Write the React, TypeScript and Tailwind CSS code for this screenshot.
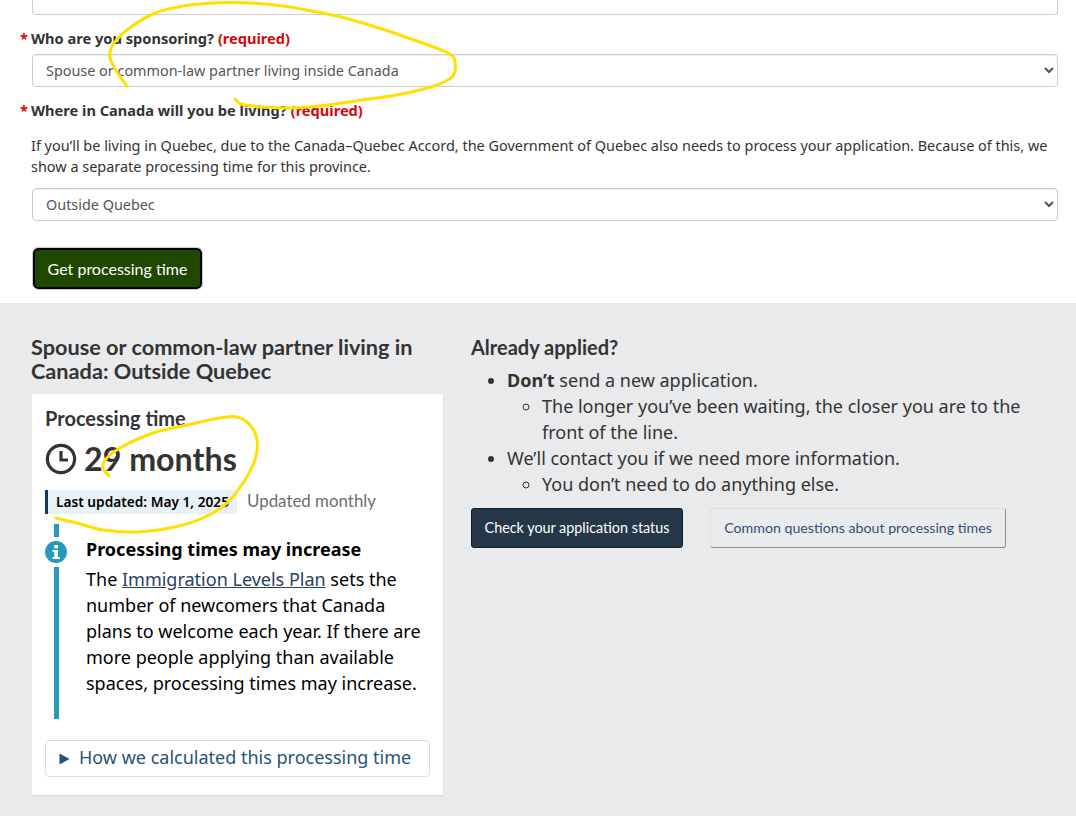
import React from "react";

const noto = { fontFamily: '"Noto Sans", sans-serif' };
const lato = { fontFamily: 'Lato, sans-serif' };

function smooth(p: number[][]) {
  let d = `M${p[0][0]} ${p[0][1]}`;
  for (let i = 0; i < p.length - 1; i++) {
    const a = p[Math.max(i - 1, 0)];
    const b = p[i];
    const c = p[i + 1];
    const e = p[Math.min(i + 2, p.length - 1)];
    d += `C${(b[0] + (c[0] - a[0]) / 6).toFixed(1)} ${(b[1] + (c[1] - a[1]) / 6).toFixed(1)} ${(c[0] - (e[0] - b[0]) / 6).toFixed(1)} ${(c[1] - (e[1] - b[1]) / 6).toFixed(1)} ${c[0]} ${c[1]}`;
  }
  return d;
}

const loopA = [[127,86],[117,72],[110,57],[114,43],[131,27],[155,13],[183,6],[214,3],[248,3],[283,6],[317,12],[345,18],[379,28],[414,40],[448,53],[455,62],[452,77],[431,87],[397,95],[362,100],[328,105],[293,108],[262,107],[241,104],[235,99]];
const loopB = [[109,476],[103,468],[105,460],[120,448],[153,433],[187,425],[220,418],[237,417],[250,425],[257,440],[255,460],[243,483],[227,503],[203,518],[170,528],[137,532],[103,530],[77,523],[56,518]];

function Field({ value }: { value: string }) {
  return (
    <select
      defaultValue={value}
      className="block w-[1026px] h-[33px] ml-[32px] pl-[9px] pr-[8px] bg-white border border-[#ccc] rounded-[4px] text-[14.4px] text-[#555] shadow-[inset_0_1px_1px_rgba(0,0,0,0.075)]"
      style={noto}
    >
      <option>{value}</option>
    </select>
  );
}

function Label({ text }: { text: string }) {
  return (
    <div className="flex items-baseline h-[22px] text-[14.6px] leading-[22px] font-bold text-[#333]">
      <span className="w-[31px] pl-[20px] text-[#d3080c]">*</span>
      <span>{text}</span>
      <span className="ml-[4px] text-[#d3080c]">(required)</span>
    </div>
  );
}

export default function App() {
  return (
    <div className="relative w-[1076px] h-[816px] overflow-hidden bg-white" style={noto}>
      <div className="h-[303px] bg-white">
        <div className="h-[15px] ml-[32px] w-[1026px] border border-t-0 border-[#ccc] rounded-b-[4px]" />
        <div className="pt-[12px]">
          <Label text="Who are you sponsoring?" />
        </div>
        <div className="mt-[5px]">
          <Field value="Spouse or common-law partner living inside Canada" />
        </div>
        <div className="pt-[12px]">
          <Label text="Where in Canada will you be living?" />
        </div>
        <p className="mt-[14px] ml-[31px] w-[1030px] text-[14.45px] leading-[21px] text-[#333]">
          If you’ll be living in Quebec, due to the Canada–Quebec Accord, the Government of Quebec also needs to process your application. Because of this, we show a separate processing time for this province.
        </p>
        <div className="mt-[11px]">
          <Field value="Outside Quebec" />
        </div>
        <button
          className="block mt-[27px] ml-[33px] w-[169px] h-[41px] rounded-[5px] bg-[#1f4700] border-2 border-black outline outline-1 outline-[#ccc] text-white text-[16px]"
          style={lato}
        >
          Get processing time
        </button>
      </div>

      <div className="h-[513px] bg-[#e9eaec] flex">
        <div className="w-[412px] ml-[32px] shrink-0">
          <h2 className="mt-[32px] -ml-[1px] text-[21.7px] leading-[24px] font-bold text-[#333] w-[400px]" style={lato}>
            Spouse or common-law partner living in Canada: Outside Quebec
          </h2>
          <div className="mt-[11px] w-[411px] h-[401px] bg-white px-[13px] shadow-[0_1px_1px_rgba(0,0,0,0.08)]">
            <div className="pt-[11px] text-[20px] leading-[26px] font-bold text-[#333]" style={lato}>Processing time</div>
            <div className="mt-[10px] flex items-center gap-[7px] h-[36px]">
              <svg width="32" height="32" viewBox="0 0 32 32" fill="none" stroke="#333" strokeWidth="3.2">
                <circle cx="16" cy="16" r="13.6" />
                <path d="M16 8v9h7" />
              </svg>
              <span className="text-[32.2px] leading-[36px] font-bold text-[#333]" style={lato}>29 months</span>
            </div>
            <div className="mt-[13px] flex items-center h-[24px]">
              <span className="h-[24px] w-[192px] bg-[#e8f1f5] border-l-[3px] border-[#11385f] pl-[8px] text-[13.7px] leading-[23px] font-semibold text-black whitespace-nowrap">
                Last updated: May 1, 2025
              </span>
              <span className="ml-[10px] -mt-[3px] text-[16.9px] text-[#6d6e71]" style={lato}>Updated monthly</span>
            </div>
            <div className="mt-[10px] flex h-[195px]">
              <div className="w-[22px] shrink-0 flex flex-col items-center">
                <div className="w-[5px] h-[13px] bg-[#269abc]" />
                <svg className="my-[4px] shrink-0" width="22" height="22" viewBox="0 0 22 22">
                  <circle cx="11" cy="11" r="11" fill="#269abc" />
                  <rect x="9.2" y="4" width="3.8" height="3.4" fill="#fff" />
                  <path d="M7.6 9h5.4v7h1.6v2H7.6v-2h1.6v-5H7.6z" fill="#fff" />
                </svg>
                <div className="w-[5px] flex-1 bg-[#269abc]" />
              </div>
              <div className="ml-[19px] text-black">
                <div className="mt-[12px] text-[18px] leading-[26px] font-bold">Processing times may increase</div>
                <p className="mt-[4px] text-[18px] leading-[26px] w-[345px]">
                  The <a className="underline text-[#284162]">Immigration Levels Plan</a> sets the number of newcomers that Canada plans to welcome each year. If there are more people applying than available spaces, processing times may increase.
                </p>
              </div>
            </div>
            <div className="mt-[21px] w-[385px] h-[37px] pb-[2px] border border-[#ddd] rounded-[4px] flex items-center pl-[13px] text-[#295376] text-[18px] whitespace-nowrap">
              <svg className="mt-[2px]" width="11" height="12" viewBox="0 0 11 12" fill="#295376"><path d="M0.5 0.5L10.5 6L0.5 11.5z" /></svg>
              <span className="ml-[9px]">How we calculated this processing time</span>
            </div>
          </div>
        </div>

        <div className="ml-[27px] w-[570px]">
          <h2 className="mt-[32px] text-[20px] leading-[24px] font-bold text-[#333]" style={lato}>Already applied?</h2>
          <ul className="mt-[8px] list-disc pl-[36px] text-[18px] leading-[26px] text-[#333]">
            <li><strong>Don’t</strong> send a new application.
              <ul className="list-[circle] pl-[35px]">
                <li>The longer you’ve been waiting, the closer you are to the front of the line.</li>
              </ul>
            </li>
            <li>We’ll contact you if we need more information.
              <ul className="list-[circle] pl-[35px]">
                <li>You don’t need to do anything else.</li>
              </ul>
            </li>
          </ul>
          <div className="mt-[11px] flex items-center gap-[27px]" style={lato}>
            <button className="w-[212px] h-[40px] bg-[#26374a] border border-[#091c2d] rounded-[3px] text-white text-[14.35px]">Check your application status</button>
            <button className="w-[296px] h-[40px] bg-[#eaebed] border border-[#dcdee1] border-b-[#8f8f8f] border-r-[#8f8f8f] rounded-[3px] text-[#335075] text-[14.2px]">Common questions about processing times</button>
          </div>
        </div>
      </div>

      <svg className="absolute inset-0 pointer-events-none" width="1076" height="816" fill="none" stroke="#ffe000" strokeWidth="3" strokeLinecap="round" strokeLinejoin="round">
        <path d={smooth(loopA)} />
        <path d={smooth(loopB)} />
      </svg>
    </div>
  );
}
